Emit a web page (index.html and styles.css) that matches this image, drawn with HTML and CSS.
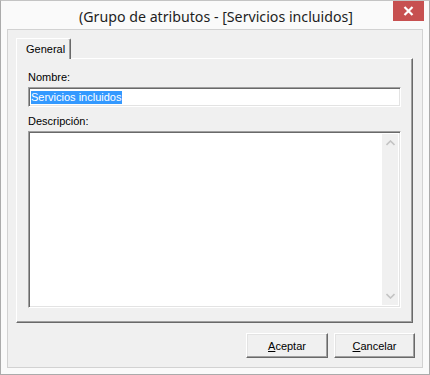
FILE: index.html
```html
<!DOCTYPE html>
<html lang="es">
<head>
<meta charset="utf-8">
<link rel="stylesheet" href="styles.css">
</head>
<body>
<div class="window">
  <div class="titlebar">
    <div class="title">(Grupo de atributos - [Servicios incluidos]</div>
    <div class="close">
      <svg width="11" height="10" viewBox="0 0 11 10"><path d="M1.5 1 L9.5 9 M9.5 1 L1.5 9" stroke="#fff" stroke-width="2.2" fill="none"/></svg>
    </div>
  </div>
  <div class="client">
    <div class="tabs">
      <div class="tab">General</div>
    </div>
    <div class="panel">
      <div class="label label-first">Nombre:</div>
      <div class="input"><span class="sel">Servicios incluidos</span></div>
      <div class="label label-second">Descripción:</div>
      <div class="textarea">
        <div class="scroll">
          <svg width="9" height="6" viewBox="0 0 9 6"><path d="M0.5 5 L4.5 1 L8.5 5" stroke="#c3c3c3" stroke-width="1.6" fill="none"/></svg>
          <svg width="9" height="6" viewBox="0 0 9 6"><path d="M0.5 1 L4.5 5 L8.5 1" stroke="#c3c3c3" stroke-width="1.6" fill="none"/></svg>
        </div>
      </div>
    </div>
    <div class="buttons">
      <div class="btn btn-ok"><u>A</u>ceptar</div>
      <div class="btn btn-cancel"><u>C</u>ancelar</div>
    </div>
  </div>
</div>
</body>
</html>
```
FILE: styles.css
```css
html, body {
  margin: 0;
  padding: 0;
  background: #ffffff;
}
.window {
  box-sizing: border-box;
  width: 430px;
  height: 375px;
  border: 1px solid #ababab;
  border-top-color: #c4c4c4;
  background: #fafafa;
  display: flex;
  flex-direction: column;
  font-family: "Liberation Sans", Arial, sans-serif;
  font-size: 11px;
  color: #000;
}
.titlebar {
  height: 29px;
  position: relative;
  display: flex;
  justify-content: center;
  align-items: center;
}
.title {
  font-family: "Noto Sans", "Open Sans", sans-serif;
  font-size: 14.2px;
  color: #1e1e1e;
  padding-top: 3px;
  padding-left: 2px;
}
.close {
  position: absolute;
  right: 5px;
  top: 0;
  width: 31px;
  height: 20px;
  background: #c75050;
  display: flex;
  align-items: center;
  justify-content: center;
}
.client {
  flex: 1;
  margin: 0 6px 6px 6px;
  border: 1px solid #d2d2d2;
  background: #f0f0f0;
  display: flex;
  flex-direction: column;
  padding: 8px 8px 9px 8px;
}
.tabs {
  display: flex;
  position: relative;
  z-index: 1;
  margin-bottom: -1px;
}
.tab {
  box-sizing: border-box;
  width: 55px;
  height: 21px;
  background: #f0f0f0;
  border-left: 1px solid #ffffff;
  border-top: 1px solid #ffffff;
  border-right: 1px solid #696969;
  box-shadow: inset -1px 0 #a0a0a0;
  border-top-right-radius: 2px;
  border-top-left-radius: 1px;
  padding: 4px 0 0 9px;
}
.panel {
  box-sizing: border-box;
  width: 397px;
  height: 265px;
  border-top: 1px solid #ffffff;
  border-left: 1px solid #ffffff;
  border-right: 1px solid #696969;
  border-bottom: 1px solid #696969;
  box-shadow: inset -1px -1px #a0a0a0;
  padding: 0 11px 0 11px;
  display: flex;
  flex-direction: column;
}
.label {
  height: 13px;
  line-height: 13px;
  margin-top: 10px;
  margin-bottom: 3px;
}
.label-first {
  margin-top: 12px;
}
.label-second {
  margin-top: 8px;
}
.input {
  box-sizing: border-box;
  height: 20px;
  width: 373px;
  background: #fff;
  border: 1px solid;
  border-color: #a0a0a0 #ffffff #ffffff #a0a0a0;
  box-shadow: inset 1px 1px #696969, inset -1px -1px #e3e3e3;
  padding: 3px 0 0 2px;
  display: flex;
}
.sel {
  background: #3399ff;
  color: #fff;
  height: 13px;
  line-height: 13px;
  padding-right: 1px;
}
.textarea {
  box-sizing: border-box;
  width: 373px;
  height: 177px;
  background: #fff;
  border: 1px solid;
  border-color: #a0a0a0 #ffffff #ffffff #a0a0a0;
  box-shadow: inset 1px 1px #696969, inset -1px -1px #e3e3e3;
  display: flex;
  justify-content: flex-end;
  padding: 2px 2px 2px 2px;
}
.scroll {
  width: 16px;
  background: #f0f0f0;
  display: flex;
  flex-direction: column;
  justify-content: space-between;
  align-items: center;
  padding: 6px 0 6px 0;
}
.buttons {
  display: flex;
  justify-content: flex-end;
  gap: 6px;
  margin-top: 10px;
  margin-right: -1px;
}
.btn {
  box-sizing: border-box;
  height: 25px;
  background: #f0f0f0;
  border: 1px solid;
  border-color: #ffffff #696969 #696969 #ffffff;
  box-shadow: inset -1px -1px #a0a0a0, inset 1px 1px #e3e3e3;
  display: flex;
  align-items: center;
  justify-content: center;
  padding-top: 1px;
}
.btn-ok {
  width: 82px;
}
.btn-cancel {
  width: 81px;
}
```
